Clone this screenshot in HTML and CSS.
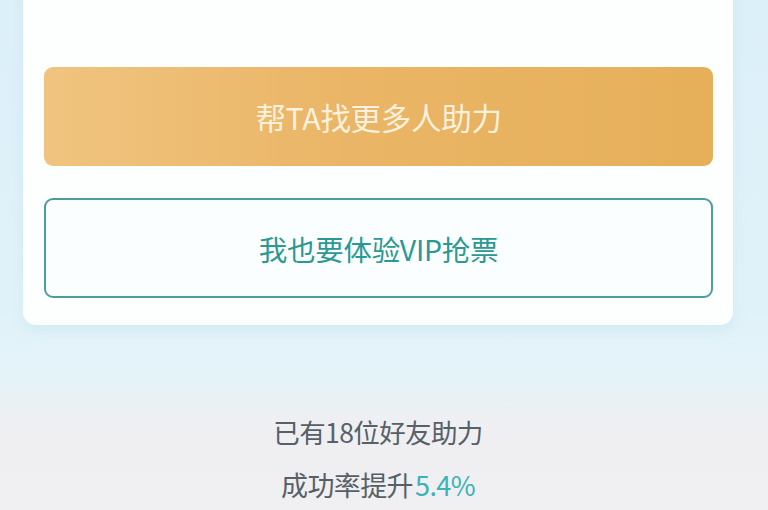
FILE: index.html
```html
<!DOCTYPE html>
<html lang="zh-CN">
<head>
<meta charset="utf-8">
<title>助力</title>
<link rel="stylesheet" href="styles.css">
</head>
<body>
<div class="page">
  <div class="card">
    <button class="btn btn-gold">帮TA找更多人助力</button>
    <button class="btn btn-outline">我也要体验VIP抢票</button>
  </div>
  <div class="stats">
    <p class="line">已有18位好友助力</p>
    <p class="line line-2">成功率提升<span class="hl">5.4%</span></p>
  </div>
</div>
</body>
</html>
```
FILE: styles.css
```css
html, body {
  margin: 0;
  padding: 0;
}
body {
  width: 768px;
  height: 510px;
  overflow: hidden;
  font-family: "Noto Sans CJK SC", "Noto Sans", sans-serif;
  background: linear-gradient(180deg, #dcf0f9 0%, #e0f2f9 60%, #e4f3f8 74%, #ecf0f3 80%, #efeff2 84%, #f0eff2 100%);
}
.page {
  display: flex;
  flex-direction: column;
  height: 510px;
}
.card {
  margin: -20px 35px 0 23px;
  padding: 87px 20px 27px 21px;
  background: #fdfefe;
  border-radius: 0 0 13px 13px;
  box-shadow: 0 5px 12px rgba(170, 210, 228, 0.25);
  display: flex;
  flex-direction: column;
  gap: 32px;
}
.btn {
  display: flex;
  align-items: center;
  justify-content: center;
  width: 100%;
  font-family: inherit;
  font-size: 30.5px;
  letter-spacing: -0.3px;
  border-radius: 9px;
  cursor: pointer;
  padding: 0;
}
.btn-gold {
  height: 99px;
  border: none;
  color: #fcf1dd;
  background: linear-gradient(90deg, #f0c47f 0%, #eab566 45%, #e6b05a 100%);
}
.btn-outline {
  height: 100px;
  font-size: 28.5px;
  background: #fbfefe;
  border: 2px solid #4a9f9c;
  color: #2b9993;
}
.stats {
  margin: 80px 35px 0 23px;
  display: flex;
  flex-direction: column;
  align-items: center;
}
.line {
  margin: 0;
  height: 53px;
  line-height: 53px;
  font-size: 26.5px;
  color: #566068;
  letter-spacing: -0.6px;
}
.line-2 {
  font-size: 27px;
}
.hl {
  color: #3bb2ba;
  margin-left: 2px;
}
```
